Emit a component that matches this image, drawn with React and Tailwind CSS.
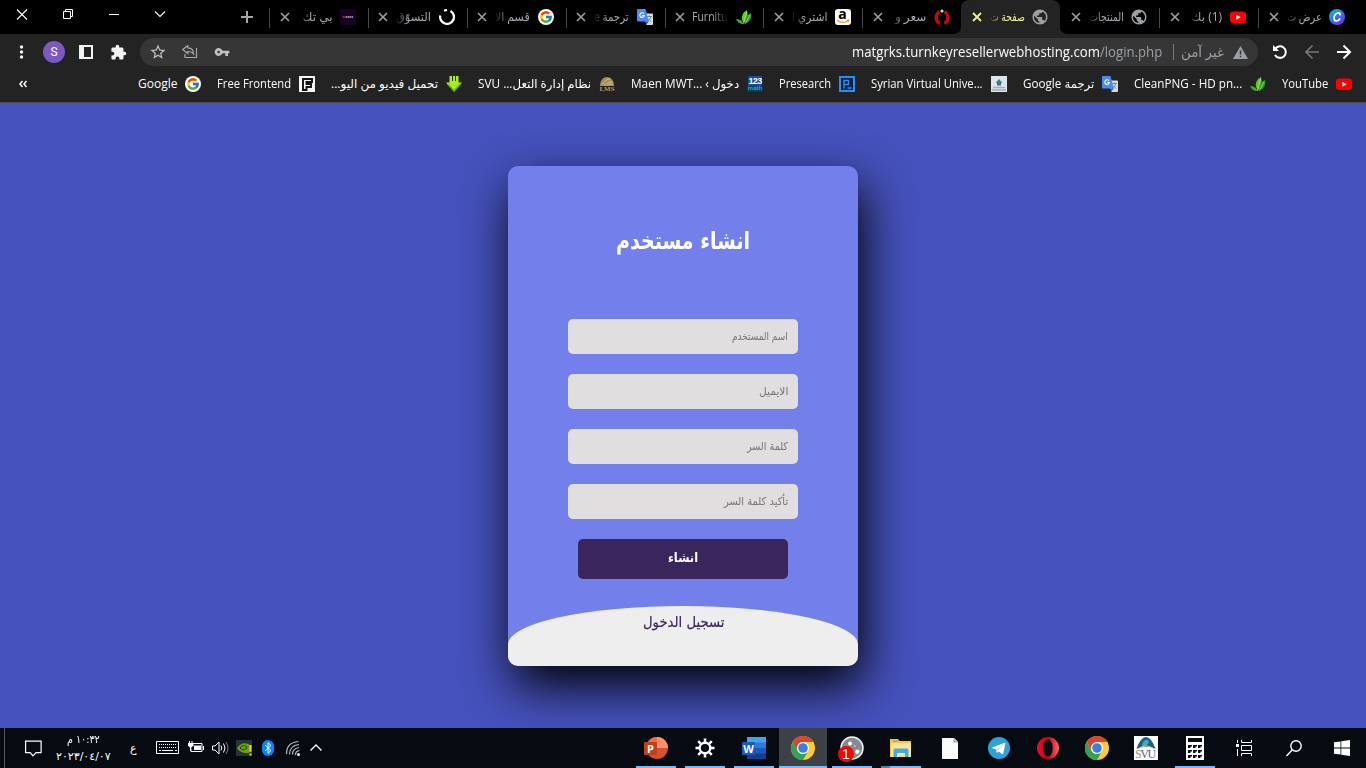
import React, { useLayoutEffect, useRef } from "react";
import { FcGoogle } from "react-icons/fc";
import { MdVpnKey, MdExtension, MdStarBorder, MdPublic } from "react-icons/md";

const UI = "font-['Open_Sans','DejaVu_Sans',sans-serif]";

/* Single line of text squeezed to the width of its box. */
function Fit({ className = "", dir = "rtl", children }) {
  const box = useRef(null);
  const inner = useRef(null);
  useLayoutEffect(() => {
    const fit = () => {
      const n = inner.current.offsetWidth;
      inner.current.style.transform = `scaleX(${box.current.clientWidth / n})`;
    };
    fit();
    document.fonts?.ready.then(fit);
  }, []);
  return (
    <span ref={box} dir="ltr" className={`block shrink-0 whitespace-nowrap ${className}`}>
      <span ref={inner} dir={dir} className="inline-block origin-left">{children}</span>
    </span>
  );
}

const YouTube = () => (
  <svg width="16" height="16" viewBox="0 0 16 16"><rect y="2.5" width="16" height="11.5" rx="3" fill="#f00" /><path d="M6.4 5.7v5l4.2-2.5z" fill="#fff" /></svg>
);
const Canva = () => (
  <svg width="16" height="16" viewBox="0 0 16 16">
    <defs><linearGradient id="cv" x1="0" y1="0" x2=".7" y2="1"><stop stopColor="#08c4cf" /><stop offset=".5" stopColor="#2f7de6" /><stop offset="1" stopColor="#7d2ae8" /></linearGradient></defs>
    <circle cx="8" cy="8" r="8" fill="url(#cv)" />
    <path d="M11 5.800c.3-1.200-.4-2-1.500-2C7.200 3.800 5 6.300 5 9c0 1.900 1 3 2.400 3 1.300 0 2.500-.8 3.300-2" fill="none" stroke="#fff" strokeWidth="1.700" strokeLinecap="round" />
  </svg>
);
const Leaf = () => (
  <svg width="16" height="16" viewBox="0 0 16 16">
    <path d="M7 13C4 8 7 3 11 1c1 4 1 9-3 13z" fill="#5cc92c" /><path d="M9 13c0-5 3-8 6-9 1 4-1 9-5 10z" fill="#2f9c28" /><path d="M7 14c-1-3-4-4-7-4 1 3 4 5 7 5z" fill="#3fa82d" /><path d="M7.500 15 10.500 3M9 15l5-9" stroke="#b7ee73" strokeWidth=".7" />
  </svg>
);
const Translate = () => (
  <svg width="16" height="16" viewBox="0 0 16 16">
    <path d="M6 4.500h9.200a.8.800 0 0 1 .8.800V15a1 1 0 0 1-1 1H9.500z" fill="#dcdcdc" /><path d="M9.500 7.500H15M12.200 6.500v1M14 7.600c-.5 2-2 3.500-3.500 4.400M11 9.500c.8 1.200 2 2.200 3.200 2.800" stroke="#6b7f94" strokeWidth=".9" fill="none" />
    <path d="M1 0h7.500l3.300 12.500H1a1 1 0 0 1-1-1V1a1 1 0 0 1 1-1z" fill="#4a8af4" /><path d="M8.200 12.500h3.600L9.500 15.500z" fill="#2a56c6" />
    <path d="M7 4.700A2.300 2.300 0 1 0 7.400 6.500H5.200" fill="none" stroke="#fff" strokeWidth="1.100" />
  </svg>
);
const Globe = () => <MdPublic size={18} className="shrink-0 text-[#9aa0a6]" />;
const Google = () => (
  <span className="flex size-4 items-center justify-center rounded-full bg-white"><FcGoogle size={14} /></span>
);
const AmazonLogo = () => (
  <span className="relative flex size-4 rounded-[3px] bg-white">
    <span className="absolute -top-[4px] left-[3.5px] font-['Open_Sans',sans-serif] text-[14px] leading-[18px] font-bold text-black">a</span>
    <svg className="absolute inset-0" width="16" height="16" viewBox="0 0 16 16"><path d="M2 11.200c4 2.800 8 2.800 11.300.6M11.500 11.200l2.300-.1-.6 2" fill="none" stroke="#f90" strokeWidth="1.200" /></svg>
  </span>
);
const Horseshoe = () => (
  <svg width="16" height="16" viewBox="0 0 16 16"><path d="M5.500 2.500C1 5.500 1 12 5.500 14.500M10.500 2.500c4.500 3 4.500 9.500 0 12" fill="none" stroke="#c4090f" strokeWidth="3.200" /><path d="M8 .3 10 2 8 4 6 2z" fill="#b9d9ee" /></svg>
);
const Spinner = () => (
  <svg width="16" height="16" viewBox="0 0 16 16"><path d="M11.500 2A6.900 6.900 0 1 1 1.300 6.500M5 1.700 8 1" fill="none" stroke="#fff" strokeWidth="2.300" /></svg>
);
const BTech = () => (
  <svg width="16" height="16" viewBox="0 0 16 16"><rect width="16" height="16" rx="2" fill="#150321" /><path d="M2.500 8h2.500" stroke="#b33" strokeWidth="1.400" strokeDasharray="1.500 .3" /><path d="M5.500 8h8" stroke="#b5aebc" strokeWidth="1.400" strokeDasharray="1.600 .4" /></svg>
);

const tabs = [
  ["بي تك", "w-[30px]", BTech, true],
  ["التسوّق", "w-[35px]", Spinner, true],
  ["قسم الا", "w-[35px]", Google, true],
  ["ترجمة e", "w-[35px]", Translate, true],
  ["Furnitu", "w-[35px]", Leaf, true],
  ["اشتري ا", "w-[35px]", AmazonLogo, true],
  ["سعر و", "w-[31px]", Horseshoe, true],
  ["صفحة ت", "w-[35px]", Globe, false],
  ["المنتجات", "w-[35px]", Globe, false],
  ["(1) بك", "w-[31px]", YouTube, true],
  ["عرض ت", "w-[35px]", Canva, true],
];

function TabX({ active }) {
  return <svg className="shrink-0" width="10" height="10" viewBox="0 0 10 10"><path d="m1 1 8 8M9 1 1 9" stroke={active ? "#f3ef95" : "#9aa0a6"} strokeWidth={active ? 1.8 : 1.6} /></svg>;
}

function Tab({ tab: [text, w, Icon, divider], active }) {
  const latin = text[0] === "F";
  return (
    <div className={`relative flex h-[34px] w-[98.9px] shrink-0 items-center pl-[10.6px] ${active ? "rounded-t-lg bg-[#232323]" : ""}`}>
      {divider && <span className="absolute top-[8px] left-0 h-5 w-px bg-[#4a4a4a]" />}
      {active && (
        <svg className="absolute bottom-0 -left-2" width="115" height="8" viewBox="0 0 115 8"><path d="M0 8Q8 8 8 0V8zM115 8Q107 8 107 0V8z" fill="#232323" /></svg>
      )}
      <TabX active={active} />
      <div className={`ml-[7px] flex h-6 w-[36px] shrink-0 overflow-hidden ${latin ? "justify-start [mask-image:linear-gradient(to_left,transparent,black_14px)]" : "justify-end [mask-image:linear-gradient(to_right,transparent,black_14px)]"}`}>
        <Fit dir={latin ? "ltr" : "rtl"} className={`${w} text-xs leading-[23px] ${active ? "text-[#f3ef95]" : "text-[#a5abb1]"}`}>{text}</Fit>
      </div>
      <div className="ml-[7.6px] flex size-4 shrink-0 items-center justify-center"><Icon /></div>
    </div>
  );
}

const FreeFrontend = () => (
  <svg width="16" height="16" viewBox="0 0 16 16"><path d="M0 0h16v16H0z" fill="#f5f5f5" /><path d="M4 14V3h9v3H7.500v2H12v3H7.500v3z" fill="none" stroke="#111" strokeWidth="1.900" /></svg>
);
const Down = () => (
  <svg width="16" height="16" viewBox="0 0 16 16"><path d="M3.500 0H6v5h1V0h2v5h1V0h2.500v6.500H16L8 15.500 0 6.500h3.500z" fill="#a9f01a" /><path d="m1.500 8 6.500 7 6.500-7" fill="none" stroke="#63ad05" strokeWidth="1.500" /></svg>
);
const Lms = () => (
  <span className="relative block size-4">
    <svg className="absolute inset-0" width="16" height="16" viewBox="0 0 16 16"><path d="M1 10C1-2 15-2 15 10z" fill="#a58d52" /><path d="M3 9c2-4 5-6 8-6M5 10c2-3 5-4 8-4M8 10c2-2 4-2 6-2" stroke="#e4d7a9" strokeWidth=".7" fill="none" /></svg>
    <span className="absolute top-[10px] left-0 w-4 text-center font-['Liberation_Serif',serif] text-[7px] leading-[7px] font-bold text-[#b89e60]">LMS</span>
  </span>
);
const Maths = () => (
  <span className="relative block size-4 text-center font-['Liberation_Sans',sans-serif] font-bold">
    <span className="absolute top-0 left-[1px] w-[14px] bg-[#1b4d94] text-[9px] leading-[10px] tracking-[-.6px] text-white">123</span>
    <span className="absolute top-[10px] left-0 h-[6px] w-4 overflow-hidden bg-[#09395c] text-[6px] leading-[5px] text-[#16b3d9]">math</span>
  </span>
);
const Pre = () => (
  <svg width="16" height="16" viewBox="0 0 16 16"><path d="M1 1h14v14H1z" fill="#10233d" stroke="#2c8df5" strokeWidth="2" /><path d="M5 12.500V4.500h4.500v4H5M8.500 12h4" fill="none" stroke="#2c8df5" strokeWidth="1.400" /></svg>
);
const Svu = () => (
  <svg width="16" height="16" viewBox="0 0 16 16"><path d="M0 0h16v16H0z" fill="#dfe5e8" /><path d="M4.500 7 8 3l3.500 4z" fill="#2e87a3" /><path d="M6 7h4v2.500H6z" fill="#4d6a7b" /><path d="M2 11.500h12M1 14h14" stroke="#9eb0b8" strokeWidth="1.500" /></svg>
);

const bookmarks = [
  ["Google", "w-[39px]", Google, "ltr"],
  ["Free Frontend", "w-[74px]", FreeFrontend, "ltr"],
  ["تحميل فيديو من اليو...", "w-[107px]", Down, "rtl"],
  ["نظام إدارة التعل... SVU", "w-[113px]", Lms, "rtl"],
  ["دخول › Maen MWT...\u200e", "w-[108px]", Maths, "rtl"],
  ["Presearch", "w-[52px]", Pre, "ltr"],
  ["Syrian Virtual Unive...", "w-[112px]", Svu, "ltr"],
  ["ترجمة Google", "w-[71px]", Translate, "rtl"],
  ["CleanPNG - HD pn...", "w-[108px]", Leaf, "ltr"],
  ["YouTube", "w-[46px]", YouTube, "ltr"],
];

function Browser() {
  return (
    <header className={`${UI} text-xs`}>
      <div className="flex h-[34px] bg-black">
        <div className="flex w-[268px] shrink-0 items-start">
          <svg width="268" height="34" viewBox="0 0 268 34" fill="none" stroke="#fff">
            <path d="m17 9.500 10 10M27 9.500l-10 10M155 11.500l5 5 5-5" strokeWidth="1.100" />
            <path d="M63.500 11.500h7v7h-7zM65.500 11V9.500h7v7H71M109 14.500h10" />
            <path d="M247 11v12M241 17h12" stroke="#a4a8ab" strokeWidth="2" />
          </svg>
        </div>
        <div className="flex pl-px">{tabs.map((t, i) => <Tab key={i} tab={t} active={i === 7} />)}</div>
      </div>
      <div className="flex h-[34px] items-center bg-[#232323] pt-[2px]">
        <div className="flex w-[140px] shrink-0 items-center">
          <svg className="ml-[19px]" width="5" height="14" viewBox="0 0 5 14" fill="#f1f3f4"><circle cx="2.500" cy="2" r="1.700" /><circle cx="2.500" cy="7" r="1.700" /><circle cx="2.500" cy="12" r="1.700" /></svg>
          <span className="ml-[19px] flex size-[22px] items-center justify-center rounded-full bg-[#7e57c2] font-['Roboto',sans-serif] text-xs text-white">S</span>
          <svg className="ml-[14px]" width="14" height="14" viewBox="0 0 14 14"><path d="M1 1h12v12H1z" fill="none" stroke="#f1f3f4" strokeWidth="2" /><path d="M0 0h5v14H0z" fill="#f1f3f4" /></svg>
          <MdExtension className="ml-[17px] text-[#f1f3f4]" size={17} />
        </div>
        <div className="flex h-7 w-[1118px] shrink-0 items-center rounded-full bg-[#363636]">
          <MdStarBorder className="ml-[9px] text-[#c0c3c6]" size={18} />
          <svg className="ml-[15px]" width="16" height="14" viewBox="0 0 16 14" fill="none" stroke="#a5a8ab" strokeWidth="1.200"><path d="m.8 4.500 5-4v2.300c4 .2 5.700 2.500 5.700 6.200C10 7 8.500 6.500 5.800 6.500v2zM14.500 3v9.500H3V9" /></svg>
          <MdVpnKey className="ml-[16px] text-[#c0c3c6]" size={16} />
          <div className="ml-[622px] flex items-center text-sm text-[#9aa0a6]">
            <Fit dir="ltr" className="w-[310px] leading-[26px]"><span className="text-white">matgrks.turnkeyresellerwebhosting.com</span>/login.php</Fit>
            <span className="ml-[11px] h-4 w-px bg-[#77797b]" />
            <Fit className="ml-[7px] w-[43px] leading-[26px]">غير آمن</Fit>
            <svg className="ml-[9px]" width="15" height="13" viewBox="0 0 15 13"><path d="M7.500 0 15 13H0z" fill="#9aa0a6" /><path d="M7.500 4.500v4M7.500 9.700v1.600" stroke="#363636" strokeWidth="1.500" /></svg>
          </div>
        </div>
        <svg className="ml-[15px]" width="93" height="16" viewBox="1273 44 93 16" fill="none" strokeWidth="2">
          <path d="M1274.800 49.500A5.800 5.800 0 1 1 1275 55" stroke="#fff" /><path d="M1273 45v6h6z" fill="#fff" />
          <path d="M1319 52h-12.500M1312.500 45.500 1306 52l6.500 6.500" stroke="#77797b" strokeWidth="1.700" />
          <path d="M1337 52h12.500M1343.500 45.500 1350 52l-6.500 6.500" stroke="#fff" />
        </svg>
      </div>
      <div className="flex h-[35px] items-center justify-between border-b border-[#4b4b4b] bg-[#232323] pr-[14px] pb-[3px] pl-[19px]">
        <svg width="8" height="8" viewBox="0 0 8 8" fill="none" stroke="#fff" strokeWidth="1.500"><path d="M3.500 1 1 4l2.500 3M7.500 1 5 4l2.500 3" /></svg>
        <div className="flex gap-4">
          {bookmarks.map(([text, w, Icon, dir]) => (
            <div key={text} className="flex items-center gap-2 text-white">
              <Fit dir={dir} className={`${w} leading-4`}>{text}</Fit>
              <span className="block size-4"><Icon /></span>
            </div>
          ))}
        </div>
      </div>
    </header>
  );
}

const AR = "font-['DejaVu_Sans',sans-serif]";

function Field({ text, w }) {
  return (
    <div className="flex h-[35px] w-[230px] items-center justify-end rounded-[5px] bg-[#e0dede] pr-[10px] text-[#757575]">
      <Fit className={`${w} text-[11px] leading-4`}>{text}</Fit>
    </div>
  );
}

function SignUp() {
  return (
    <main className={`${AR} flex h-[625px] justify-center overflow-hidden bg-[#4652bd] pt-[63px]`}>
      <section className="flex h-[500px] w-[350px] flex-col items-center overflow-hidden rounded-[10px] bg-[#7380ec] shadow-[5px_20px_50px_#000]">
        <h1 className="mt-[55px] h-[98px] shrink-0 text-[24px] leading-[40px] font-bold text-white"><Fit className="w-[134px]">انشاء مستخدم</Fit></h1>
        <form className="flex shrink-0 flex-col items-center gap-5">
          <Field text="اسم المستخدم" w="w-[56px]" />
          <Field text="الايميل" w="w-[29px]" />
          <Field text="كلمة السر" w="w-[41px]" />
          <Field text="تأكيد كلمة السر" w="w-[64px]" />
          <button type="button" className="flex h-10 w-[210px] justify-center rounded-[5px] bg-[#3b255d] pt-[9px] text-[13px] leading-[20px] font-bold text-white"><Fit className="w-[30px]">انشاء</Fit></button>
        </form>
        <div className="mt-[27px] flex h-[460px] w-[350px] shrink-0 justify-center rounded-[60%/10%] bg-[#eee] pt-[4px] text-[15px] leading-[24px] text-[#3b255d] [-webkit-text-stroke:0.2px_#3b255d]"><Fit className="w-[81px]">تسجيل الدخول</Fit></div>
      </section>
    </main>
  );
}

const Chrome = () => (
  <svg width="24" height="24" viewBox="0 0 24 24">
    <circle cx="12" cy="12" r="12" fill="#fc3" /><path d="M1.600 6A12 12 0 0 1 22.400 6H12a6 6 0 0 0-5.500 8.500z" fill="#dd4232" /><path d="M1.600 6A12 12 0 0 0 12 24l5.200-9a6 6 0 0 1-10.400 0z" fill="#32a350" /><circle cx="12" cy="12" r="6" fill="#fff" /><circle cx="12" cy="12" r="4.800" fill="#3b7ded" />
  </svg>
);
const PowerPoint = () => (
  <span className="relative block h-[22px] w-6">
    <svg width="24" height="22" viewBox="0 0 24 22"><circle cx="13" cy="11" r="11" fill="#d35230" /><path d="M13 0a11 11 0 0 1 11 11H13z" fill="#ff8f6b" /><path d="M13 0v11H2A11 11 0 0 1 13 0z" fill="#ed6c47" /><rect y="5" width="13" height="13" rx="1" fill="#c43e1c" /></svg>
    <span className="absolute top-[5px] left-0 w-[13px] text-center font-['Open_Sans',sans-serif] text-[11px] leading-[13px] font-bold text-white">P</span>
  </span>
);
const Word = () => (
  <span className="relative block h-[22px] w-6">
    <svg width="24" height="22" viewBox="0 0 24 22"><path d="M5 0h19v6H5z" fill="#41a5ee" /><path d="M5 5.500h19v6H5z" fill="#2b7cd3" /><path d="M5 11h19v6H5z" fill="#185abd" /><path d="M5 16.500h19V22H5z" fill="#103f91" /><rect y="5" width="13" height="13" rx="1" fill="#185abd" /></svg>
    <span className="absolute top-[5px] left-0 w-[13px] text-center font-['Open_Sans',sans-serif] text-[11px] leading-[13px] font-bold text-white">W</span>
  </span>
);
const Gear = () => (
  <svg width="20" height="20" viewBox="-10 -10 20 20" stroke="#fff" fill="none"><circle r="5.300" strokeWidth="2.400" /><path d="M0-6v-3.500M0 6v3.500M-6 0h-3.500M6 0h3.500M4.300-4.300 6.800-6.800M-4.300 4.300l-2.500 2.500M-4.300-4.300l-2.500-2.500M4.300 4.300l2.500 2.500" strokeWidth="2.500" /></svg>
);
const Obs = () => (
  <span className="relative block size-6">
    <svg width="24" height="24" viewBox="0 0 24 24"><circle cx="12" cy="12" r="11" fill="#858b8e" stroke="#f3f3f3" strokeWidth="1.500" /><circle cx="10" cy="7.500" r="2" fill="#fff" /><path d="M14 9.500l1.500 1M16 14.500q3.500-1.500 3 2-1.500 1.500-3.500.5z" fill="#fff" stroke="#fff" /></svg>
    <span className="absolute top-[10px] -left-[2px] flex size-4 items-center justify-center rounded-full bg-[#fb0404] font-['Liberation_Sans',sans-serif] text-[14px] leading-4 text-white">1</span>
  </span>
);
const Explorer = () => (
  <svg width="22" height="19" viewBox="0 0 22 19"><path d="M0 0h8l1.500 2H21v16H0z" fill="#f5c550" /><path d="M1 4h20v14H1z" fill="#ffe394" /><path d="M3 2h5" stroke="#39a9df" /><path d="M3.500 18V11a1.500 1.500 0 0 1 1.500-1.500h12a1.500 1.500 0 0 1 1.500 1.500v7H15v-4H7v4z" fill="#3faee5" /></svg>
);
const Doc = () => (
  <svg width="16" height="21" viewBox="0 0 16 21"><path d="M0 0h12l4 4v17H0z" fill="#fafafa" /><path d="M12 0v4h4" fill="#ccc" stroke="#777" strokeWidth=".6" /></svg>
);
const Telegram = () => (
  <svg width="22" height="22" viewBox="0 0 22 22"><circle cx="11" cy="11" r="11" fill="#2ca1da" /><path d="m3.500 10.700 13-5c.7-.2 1.100.2.900 1l-2.200 9.700c-.2.700-.7.800-1.300.5l-3.300-2.500-1.700 1.500-.8-3.500z" fill="#fff" /><path d="m8 12.500 6.500-4-5 5-.6 2.400z" fill="#b7d9ec" /></svg>
);
const Opera = () => (
  <svg width="22" height="22" viewBox="0 0 22 22"><defs><linearGradient id="op" x2="1"><stop stopColor="#e51127" /><stop offset=".5" stopColor="#cb0017" /><stop offset="1" stopColor="#ff6270" /></linearGradient></defs><path fillRule="evenodd" d="M11 0a11 11 0 1 0 0 22 11 11 0 0 0 0-22zm0 2.500c2.700 0 4.700 3.500 4.700 8.500s-2 8.500-4.700 8.500-4.700-3.500-4.700-8.500 2-8.500 4.700-8.500z" fill="url(#op)" /></svg>
);
const SvuBig = () => (
  <span className="relative block size-6 bg-white">
    <svg width="24" height="24" viewBox="0 0 24 24"><path d="M2.500 13C5 5 9 1 12 1s7 4 9.500 12c-6-3-13-3-19 0z" fill="#1c5f8d" /><path d="M8 9c1-5 6-7 7-3-1 3-4 4-7 5z" fill="#36b1bd" /><path d="M4 13c5-4 11-4 16 0" stroke="#d9c58b" fill="none" /></svg>
    <span className="absolute top-[12px] left-[1px] font-['Liberation_Serif',serif] text-[12px] leading-[12px] tracking-[-1.4px] text-[#4c6687]"><span className="text-[#a99355]">S</span>VU</span>
  </span>
);
const Calc = () => (
  <svg width="18" height="24" viewBox="0 0 18 24"><path d="M0 0h18v24H0z" fill="#fff" /><path d="M2 2h14v4H2z" fill="#0a0d12" /><g fill="#0a0d12">{[9, 14, 19].map((y) => [2, 7, 12].map((x) => <path key={`${x}-${y}`} d={`M${x} ${y}h4v1.500h-1.500v1.500h-2.500z`} />))}</g></svg>
);
const TaskView = () => (
  <svg width="17" height="16" viewBox="0 0 17 16" fill="none" stroke="#fff"><path d="M5.500 0v2.500h10V0M5.500 16v-2.500h10V16M5.500 5.500h10v5h-10zM1.500 0v3M1.500 9v7" /><path d="M0 4h3v3H0z" fill="#fff" stroke="none" /></svg>
);
const SearchIcon = () => (
  <svg width="16" height="17" viewBox="0 0 16 17" fill="none" stroke="#fff" strokeWidth="1.400"><circle cx="10" cy="6" r="5.200" /><path d="M6.300 9.700.5 16" /></svg>
);
const Windows = () => (
  <svg width="16" height="16" viewBox="0 0 16 16" fill="#fff"><path d="m0 2.300 6.500-.9v6.200H0zM7.300 1.300 16 0v7.600H7.300zM0 8.400h6.500v6.200L0 13.700zM7.300 8.400H16V16l-8.700-1.200z" /></svg>
);

const apps = [
  [PowerPoint, true], [Gear, true], [Word, true], [Chrome, true], [Obs, true], [Explorer, true],
  [Doc, false], [Telegram, false], [Opera, false], [Chrome, false], [SvuBig, false], [Calc, true],
  [TaskView, false], [SearchIcon, false], [Windows, false],
];

function Tray() {
  return (
    <div className="flex h-10 w-[632px] shrink-0 items-center">
      <span className="ml-1 h-10 w-px bg-[#55585b]" />
      <svg className="mt-px ml-[20px]" width="17" height="17" viewBox="0 0 17 17" fill="none" stroke="#fff" strokeWidth="1.200"><path d="M.6 1.100h15.500v11.500h-5L8 15.800l-2.800-3.200H.6z" /></svg>
      <div className={`ml-[13px] flex w-[57px] flex-col items-center text-[11px] leading-[17px] text-white ${AR}`}>
        <Fit className="w-[33px]">١٠:٣٢ م</Fit>
        <Fit dir="ltr" className="w-[55px]"><bdo dir="ltr">٢٠٢٣/٠٤/٠٧</bdo></Fit>
      </div>
      <span className={`mt-[2px] ml-[18px] w-[8px] text-[11px] text-white ${AR}`}>ع</span>
      <svg className="ml-[18px]" width="168" height="20" viewBox="156 738 168 20" fill="none" stroke="#fff">
        <path d="M156.500 741.500h22v12h-22z" /><path d="M159 744.500h18M159 747.500h18" strokeDasharray="1 1" /><path d="M159 750.500h2M162 750.500h11M175 750.500h2" />
        <path d="M193 743.500h9v8h-11v-3M203.500 746v4" /><path d="M194 745.500h7v4.500h-7z" fill="#fff" stroke="none" /><path d="M189.500 741v2.500M192 741v2.500" /><path d="M188 743h5.500v2.500l-2 2h-1.500l-2-2z" fill="#fff" stroke="none" /><path d="M190.500 747v4" />
        <path d="M212.500 746h2.500l4-4v12l-4-4h-2.500z" /><path d="M221 745.500q1.500 2.500 0 5M223.500 743.500q3 4.500 0 9" /><path d="M226 742q4 6 0 12" stroke="#777" />
        <path d="M236 740h16v16h-16z" fill="#293233" stroke="none" /><path d="M237 748c4-6 10-6 14-2v6c-5 2-11 1-14-4z" fill="#69a500" stroke="none" /><path d="M240 748c2-3 5-3 7-1-1 3-4 4-7 1z" stroke="#203000" /><path d="M250.500 745v6.500M250.500 753.500v2" stroke="#ffd51e" strokeWidth="2" />
        <rect x="262" y="740" width="12" height="16" rx="6" fill="#0a84ff" stroke="none" /><path d="m265 745 6 5.500-3 2.800v-10.600l3 2.800-6 5.500" />
        <path d="M286.500 754q0-11.500 12-12.500M289.500 754.500q0-9 9.500-10M292.500 754.500q0-6 6.500-7M295.500 755q0-4 4-4.500" stroke="#bbb" strokeWidth="1.200" /><circle cx="298.500" cy="754.500" r="1.500" fill="#fff" stroke="none" />
        <path d="m310.500 750.500 5.500-5.500 5.500 5.500" strokeWidth="1.300" />
      </svg>
    </div>
  );
}

function Taskbar() {
  return (
    <footer className="flex h-10 bg-[#060b12]">
      <Tray />
      <div className="flex">
        {apps.map(([Icon, open], i) => (
          <div key={i} className={`relative flex h-10 items-center justify-center ${i === 13 ? "ml-px" : ""} ${i > 12 ? "w-12" : "w-[49px] pr-px"} `}>
            {i === 3 && <span className="absolute inset-y-0 left-0 w-12 bg-[#3c4148]" />}
            <span className="relative">
              <Icon />
            </span>
            {open && <span className={`absolute bottom-0 h-[2px] bg-[#76b9ff] ${i === 3 ? "left-0 w-12" : "left-1 w-10"}`} />}
            {i === 5 && <span className="absolute bottom-0 left-1 h-[2px] w-[9px] bg-[#517fa5]" />}
          </div>
        ))}
      </div>
    </footer>
  );
}

export default function App() {
  return (
    <div className="h-[768px] w-[1366px] overflow-hidden">
      <Browser />
      <SignUp />
      <Taskbar />
    </div>
  );
}
